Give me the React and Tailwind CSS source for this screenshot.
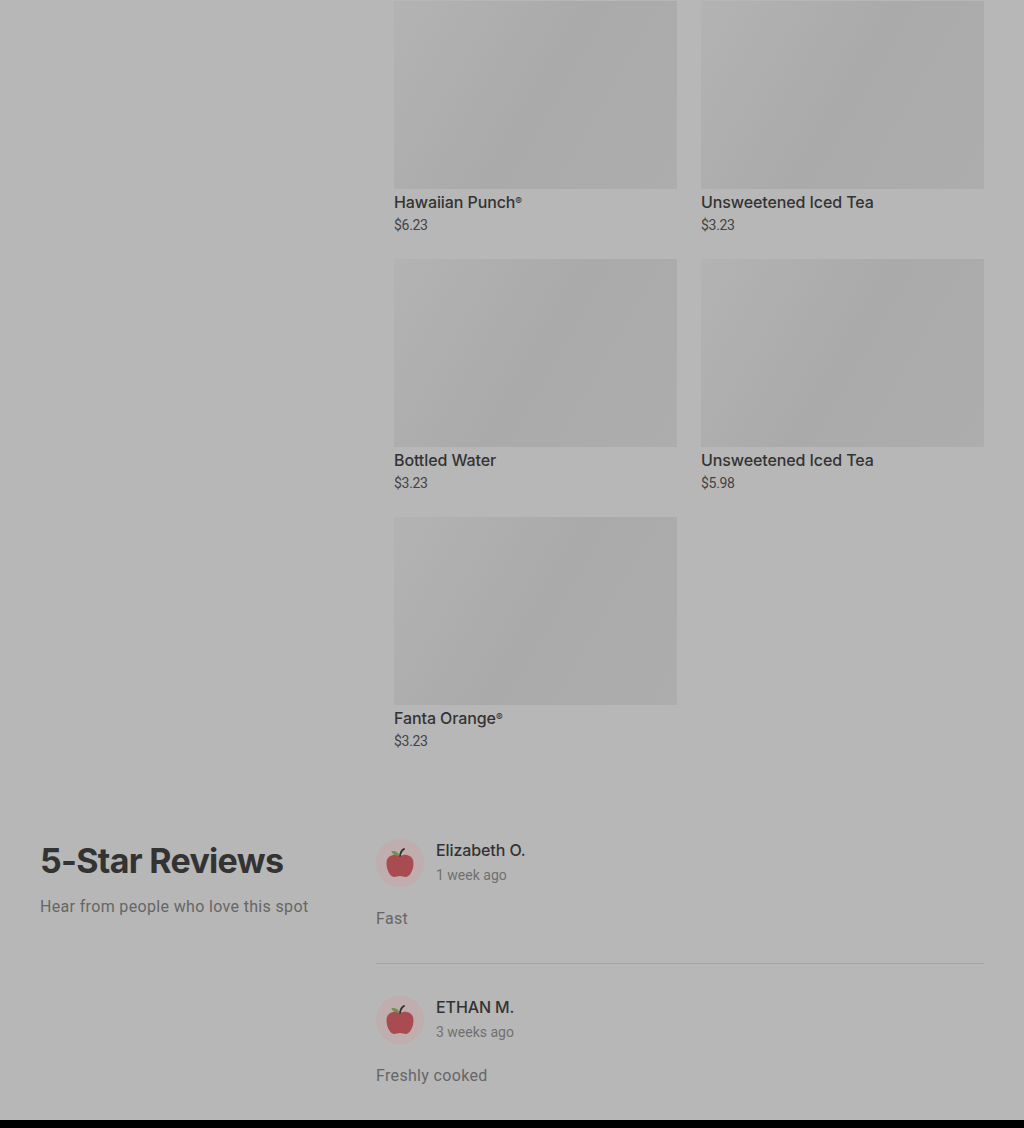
const ITEMS = [
  { name: 'Hawaiian Punch', mark: true, price: '$6.23' },
  { name: 'Unsweetened Iced Tea', price: '$3.23' },
  { name: 'Bottled Water', price: '$3.23' },
  { name: 'Unsweetened Iced Tea', price: '$5.98' },
  { name: 'Fanta Orange', mark: true, price: '$3.23' },
];

const REVIEWS = [
  { name: 'Elizabeth O.', when: '1 week ago', text: 'Fast' },
  { name: 'ETHAN M.', when: '3 weeks ago', text: 'Freshly cooked' },
];

const AppleAvatar = () => (
  <div className="flex h-12 w-12 shrink-0 items-center justify-center rounded-full bg-[#c0adad]">
    <svg width="28" height="30" viewBox="0 0 28 30">
      <path d="M14 8.500c-2-1.500-4.500-2-7-1.500C3 7.800.5 10.500.5 15.500c0 5.500 2.800 12 6.500 13.200 2.300.7 4-.7 7-.7s4.700 1.400 7 .7c3.700-1.200 6.500-7.700 6.500-13.200 0-5-2.500-7.700-6.500-8.500-2.500-.5-5 0-7 1.500z" fill="#a94c51" />
      <path d="M13.500 7.500C12.500 4.500 9.500 2.500 5.500 3c.5 3 4 5.500 8 4.500z" fill="#6f8f55" />
      <path d="M14 8c.3-3 1.500-5.500 4-7" fill="none" stroke="#2f2f2a" strokeWidth="1.800" strokeLinecap="round" />
    </svg>
  </div>
);

const App = () => {
  return (
    <div className="flex h-[1128px] flex-col overflow-hidden bg-black font-['Roboto',sans-serif]">
      <div className="h-[1120px] bg-[#b7b7b7] px-10 pt-px">
        <div className="ml-[354px] grid grid-cols-2 gap-x-6">
          {ITEMS.map((item, i) => (
            <div key={i} className="h-[258px]">
              <div className="h-[188px] bg-[linear-gradient(120deg,#b3b3b3_0%,#aaaaaa_50%,#adadad_100%)]" />
              <div className="mt-px font-['Inter',sans-serif] text-[16px] leading-6 font-medium tracking-[-0.1px] text-[#333333]">
                {item.name}
                {item.mark && <span className="align-[3px] text-[10px] leading-none">®</span>}
              </div>
              <div className="mt-px text-[14px] leading-[21px] tracking-[-0.3px] text-[#444444]">{item.price}</div>
            </div>
          ))}
        </div>

        <div className="mt-[64px] flex">
          <div className="w-[336px] shrink-0">
            <h2 className="pt-[2px] font-['Inter',sans-serif] text-[34px] leading-10 font-bold tracking-[-0.7px] text-[#333333]">5-Star Reviews</h2>
            <p className="mt-[14px] text-[16px] leading-6 tracking-[0.34px] text-[#666666]">Hear from people who love this spot</p>
          </div>
          <div className="flex-1">
            {REVIEWS.map((r, i) => (
              <div key={i} className={i === 0 ? 'border-b border-[#a3a3a3] pb-[32px]' : 'pt-8'}>
                <div className="flex items-center gap-3">
                  <AppleAvatar />
                  <div>
                    <div className="font-['Inter',sans-serif] text-[16px] leading-[22px] font-medium tracking-[-0.1px] text-[#333333]">{r.name}</div>
                    <div className="mt-[2px] text-[14px] leading-6 text-[#707070]">{r.when}</div>
                  </div>
                </div>
                <p className="mt-5 text-[16px] leading-6 tracking-[0.33px] text-[#666666]">{r.text}</p>
              </div>
            ))}
          </div>
        </div>
      </div>
    </div>
  );
};

export default App;
